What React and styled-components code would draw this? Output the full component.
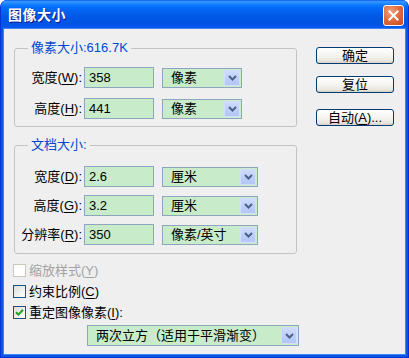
import React from 'react';
import styled, { createGlobalStyle } from 'styled-components';

const Global = createGlobalStyle`
  html, body { margin: 0; padding: 0; background: #ffffff; }
  body {
    font-family: "Liberation Sans", "Noto Sans CJK SC", sans-serif;
    font-size: 13px;
    color: #000;
  }
  * { box-sizing: border-box; }
`;

const Window = styled.div`
  width: 409px;
  height: 358px;
  display: flex;
  flex-direction: column;
  background: #0a55e4;
  border-radius: 7px 7px 0 0;
  border-left: 1px solid #0831d9;
  border-right: 1px solid #0831d9;
  border-bottom: 1px solid #0831d9;
  overflow: hidden;
`;

const TitleBar = styled.div`
  height: 29px;
  flex: none;
  display: flex;
  align-items: center;
  justify-content: space-between;
  padding: 0 4px 0 7px;
  background: linear-gradient(180deg, #0058ee 0%, #3a93ff 5%, #288eff 10%, #127dff 16%, #036ffc 24%, #0262ee 40%, #0057e5 60%, #0054e3 80%, #0055eb 90%, #005bf5 95%, #0a4fd8 100%);
`;

const Title = styled.span`
  color: #ffffff;
  font-weight: bold;
  font-size: 14px;
  line-height: 16px;
  text-shadow: 1px 1px 0 #0a1883;
  letter-spacing: 0.5px;
`;

const CloseButton = styled.div`
  width: 21px;
  height: 21px;
  border: 1px solid #ffffff;
  border-radius: 3px;
  background: radial-gradient(circle at 35% 30%, #f0a283 0%, #e0703f 45%, #c8461d 100%);
  display: flex;
  align-items: center;
  justify-content: center;
  margin-top: 1px;
`;

const Body = styled.div`
  flex: 1;
  margin: 0 3px 3px 3px;
  background: #efefef;
  display: flex;
  align-items: flex-start;
  padding-left: 9px;
  box-shadow: 0 0 0 1px #3b83f2;
`;

const LeftColumn = styled.div`
  width: 284px;
  padding-top: 11px;
  display: flex;
  flex-direction: column;
`;

const Group = styled.fieldset`
  margin: ${p => p.$top || 0}px 0 0 1px;
  width: 283px;
  min-width: 0;
  padding: ${p => p.$pt}px 0 ${p => p.$pb}px 0;
  border: 1px solid #c3c3c3;
  border-radius: 3px;
`;

const Legend = styled.legend`
  margin-left: 13px;
  padding: 0 3px;
  color: #0046d5;
  font-size: 13px;
  line-height: 16px;
`;

const Rows = styled.div`
  display: flex;
  flex-direction: column;
  gap: ${p => p.$gap}px;
`;

const Row = styled.div`
  display: flex;
  align-items: center;
  height: 21px;
`;

const Label = styled.span`
  width: 67px;
  text-align: right;
  white-space: nowrap;
  margin-right: 2px;
  line-height: 16px;
`;

const Key = styled.span`
  text-decoration: underline;
  text-underline-offset: 2px;
`;

const TextBox = styled.div`
  width: 70px;
  height: 21px;
  border: 1px solid #8ea6bd;
  background: #c8ebca;
  padding: 0 4px;
  display: flex;
  align-items: center;
  line-height: 16px;
  margin-right: 8px;
`;

const Combo = styled.div`
  width: ${p => p.$w}px;
  height: ${p => p.$h || 20}px;
  border: 1px solid #8ea6bd;
  background: #c8ebca;
  display: flex;
  align-items: center;
  margin-left: ${p => p.$ml || 0}px;
  margin-top: ${p => p.$mt || 0}px;
  padding: 1px;
`;

const ComboText = styled.span`
  flex: 1;
  padding-left: 7px;
  line-height: 16px;
  white-space: nowrap;
`;

const ArrowBox = styled.span`
  width: 16px;
  align-self: stretch;
  border: 1px solid #d2defb;
  border-radius: 1px;
  background: linear-gradient(180deg, #cedbfc 0%, #bccdf8 60%, #b3c6f5 100%);
  display: flex;
  align-items: center;
  justify-content: center;
`;

const CheckList = styled.div`
  margin-top: 6px;
  display: flex;
  flex-direction: column;
`;

const CheckRow = styled.div`
  height: 21px;
  display: flex;
  align-items: center;
  gap: 3px;
  color: ${p => (p.$disabled ? '#a3a3a3' : '#000')};
  line-height: 16px;
`;

const Box = styled.span`
  width: 13px;
  height: 13px;
  flex: none;
  border: 1px solid ${p => (p.$disabled ? '#cac8bb' : '#1c5180')};
  background: ${p => (p.$disabled ? '#ffffff' : 'linear-gradient(135deg, #dcdcd7 0%, #ffffff 100%)')};
  display: flex;
  align-items: center;
  justify-content: center;
`;

const ButtonColumn = styled.div`
  margin-left: 19px;
  padding-top: 18px;
  display: flex;
  flex-direction: column;
`;

const Button = styled.div`
  width: 78px;
  height: 17px;
  margin-top: ${p => p.$mt || 0}px;
  border: 1px solid #003c74;
  border-radius: 3px;
  background: linear-gradient(180deg, #ffffff 0%, #f5f4f0 50%, #e8e6de 85%, #d6d0c5 100%);
  display: flex;
  align-items: center;
  justify-content: center;
  line-height: 15px;
  font-size: 13px;
`;

const Chevron = () => (
  <svg width="9" height="6" viewBox="0 0 9 6">
    <path d="M1 1 L4.5 4.5 L8 1" fill="none" stroke="#4d6185" strokeWidth="2" />
  </svg>
);

const Check = () => (
  <svg width="9" height="9" viewBox="0 0 9 9">
    <path d="M1 4.2 L3.4 6.6 L8 1.8" fill="none" stroke="#21a121" strokeWidth="2" />
  </svg>
);

const Field = ({ name, k, value, unit, comboWidth }) => (
  <Row>
    <Label>
      {name}(<Key>{k}</Key>):
    </Label>
    <TextBox>{value}</TextBox>
    <Combo $w={comboWidth}>
      <ComboText>{unit}</ComboText>
      <ArrowBox>
        <Chevron />
      </ArrowBox>
    </Combo>
  </Row>
);

export default function App() {
  return (
    <>
      <Global />
      <Window>
        <TitleBar>
          <Title>图像大小</Title>
          <CloseButton>
            <svg width="11" height="11" viewBox="0 0 11 11">
              <path d="M1.5 1.5 L9.5 9.5 M9.5 1.5 L1.5 9.5" stroke="#ffffff" strokeWidth="2" strokeLinecap="square" />
            </svg>
          </CloseButton>
        </TitleBar>
        <Body>
          <LeftColumn>
            <Group $pt={11} $pb={7}>
              <Legend>像素大小:616.7K</Legend>
              <Rows $gap={10}>
                <Field name="宽度" k="W" value="358" unit="像素" comboWidth={80} />
                <Field name="高度" k="H" value="441" unit="像素" comboWidth={80} />
              </Rows>
            </Group>
            <Group $top={10} $pt={13} $pb={8}>
              <Legend>文档大小:</Legend>
              <Rows $gap={8}>
                <Field name="宽度" k="D" value="2.6" unit="厘米" comboWidth={96} />
                <Field name="高度" k="G" value="3.2" unit="厘米" comboWidth={96} />
                <Field name="分辨率" k="R" value="350" unit="像素/英寸" comboWidth={96} />
              </Rows>
            </Group>
            <CheckList>
              <CheckRow $disabled>
                <Box $disabled />
                <span>缩放样式(<Key>Y</Key>)</span>
              </CheckRow>
              <CheckRow>
                <Box />
                <span>约束比例(<Key>C</Key>)</span>
              </CheckRow>
              <CheckRow>
                <Box>
                  <Check />
                </Box>
                <span>重定图像像素(<Key>I</Key>):</span>
              </CheckRow>
            </CheckList>
            <Combo $w={212} $h={21} $ml={74} $mt={2}>
              <ComboText>两次立方（适用于平滑渐变）</ComboText>
              <ArrowBox>
                <Chevron />
              </ArrowBox>
            </Combo>
          </LeftColumn>
          <ButtonColumn>
            <Button>确定</Button>
            <Button $mt={12}>复位</Button>
            <Button $mt={16}>
              <span>自动(<Key>A</Key>)...</span>
            </Button>
          </ButtonColumn>
        </Body>
      </Window>
    </>
  );
}
